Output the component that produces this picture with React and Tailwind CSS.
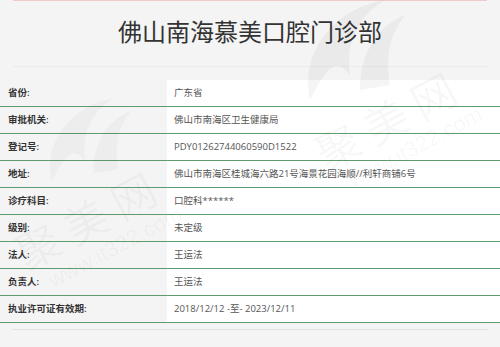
import React from 'react';

const rows = [
  ['省份:', '广东省'],
  ['审批机关:', '佛山市南海区卫生健康局'],
  ['登记号:', 'PDY01262744060590D1522'],
  ['地址:', '佛山市南海区桂城海六路21号海景花园海顺//利轩商铺6号'],
  ['诊疗科目:', '口腔科******'],
  ['级别:', '未定级'],
  ['法人:', '王运法'],
  ['负责人:', '王运法'],
  ['执业许可证有效期:', '2018/12/12 -至- 2023/12/11'],
];

function Swoosh({ className }) {
  return (
    <svg viewBox="0 0 120 110" className={className} fill="#000">
      <path d="M20 105 C 10 60, 40 15, 95 5 C 70 20, 55 45, 60 80 C 45 60, 35 75, 20 105 Z" />
      <path d="M70 95 C 70 55, 90 30, 115 20 C 100 40, 95 60, 100 90 Z" />
    </svg>
  );
}

function Watermark({ className }) {
  return (
    <div className={`absolute pointer-events-none select-none -rotate-[28deg] text-black/[0.035] ${className}`}>
      <div className="text-[44px] leading-none tracking-[10px]">聚美网</div>
      <div className="text-[22px] leading-none mt-1 ml-4" style={{ fontFamily: '"Liberation Sans", sans-serif' }}>www.it322.com</div>
    </div>
  );
}

export default function App() {
  return (
    <div
      className="relative w-[500px] h-[347px] bg-[#f4f4f4] overflow-hidden"
      style={{ fontFamily: '"Open Sans", "Noto Sans CJK SC", sans-serif' }}
    >
      <div className="mx-[13px] border-t border-[#f2c9cb] h-[67px] border-b border-b-[#ebebeb] flex items-center justify-center">
        <h1 className="text-[24px] text-[#333] leading-none pb-1">佛山南海慕美口腔门诊部</h1>
      </div>

      <div className="mt-[13px]">
        {rows.map(([label, value]) => (
          <div key={label} className="flex h-[27px] border-b border-[#5e9c6e]">
            <div className="w-[167px] shrink-0 flex items-center pl-2 text-[9.5px] text-[#333] font-semibold">
              {label}
            </div>
            <div className="flex-1 bg-white flex items-center pl-[7px] text-[9.5px] text-[#555]">
              {value}
            </div>
          </div>
        ))}
      </div>

      <div className="mx-3 mt-[6px] border-t border-[#e2e2e2]" />

      <Swoosh className="absolute left-[285px] -top-[5px] w-[130px] h-[110px] opacity-[0.035] pointer-events-none" />
      <Swoosh className="absolute left-[35px] top-[85px] w-[100px] h-[110px] opacity-[0.025] pointer-events-none" />
      <Watermark className="left-[15px] top-[195px]" />
      <Watermark className="left-[315px] top-[95px]" />
    </div>
  );
}
